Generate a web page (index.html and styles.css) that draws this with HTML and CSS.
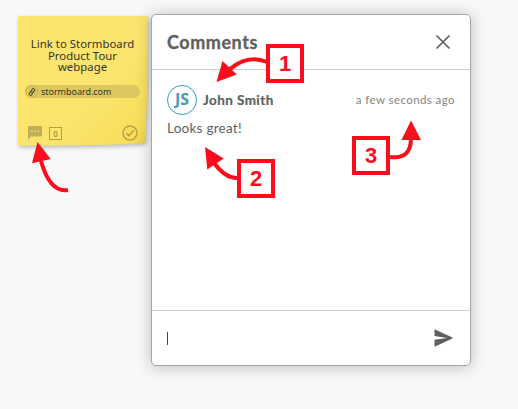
FILE: index.html
```html
<!DOCTYPE html>
<html lang="en">
<head>
<meta charset="utf-8">
<title>Comments</title>
<link rel="stylesheet" href="styles.css">
</head>
<body>
<main class="board">
  <article class="note">
    <svg class="note-paper" viewBox="0 0 131 131" aria-hidden="true">
      <defs><linearGradient id="paper" x1="0" y1="0" x2="1" y2="1"><stop offset="0" stop-color="#fce46d"/><stop offset=".6" stop-color="#fbe56f"/><stop offset=".92" stop-color="#f8dd59"/><stop offset="1" stop-color="#eccb3f"/></linearGradient></defs>
      <path d="M0 0H130Q130 65 127.5 124Q127.5 127 124 127.2Q90 129.5 0 129.5Z" fill="url(#paper)"/>
    </svg>
    <h2 class="note-title">Link to Stormboard<br>Product Tour<br>webpage</h2>
    <div class="link-pill">
      <span class="link-icon"><svg width="8" height="8" viewBox="0 0 24 24" fill="none" stroke="#4d4828" stroke-width="3" stroke-linecap="round"><g transform="rotate(-12 12 12)"><path d="M10 14a4 4 0 0 0 6 0l4-4a4 4 0 0 0-6-6l-2 2M14 10a4 4 0 0 0-6 0l-4 4a4 4 0 0 0 6 6l2-2"/></g></svg></span>
      <span class="link-text">stormboard.com</span>
    </div>
    <footer class="note-footer">
      <svg width="14" height="14" viewBox="0 0 14 14"><path d="M1.2 0H12.8Q14 0 14 1.2V9.3Q14 10.5 12.8 10.5H3L0 13.5V1.2Q0 0 1.2 0Z" fill="#c0ae55"/><path d="M3 5.3h1.6M6.2 5.3h1.6M9.4 5.3h1.6" stroke="#f3dd70" stroke-width="1.5"/></svg>
      <span class="votes">0</span>
      <svg class="check" width="16" height="16" viewBox="0 0 16 16" fill="none" stroke="#b5a145"><circle cx="8" cy="8" r="7" stroke-width="1.4"/><path d="M4.2 8.2 6.8 10.6 11.8 5.3" stroke-width="1.5"/></svg>
    </footer>
  </article>

  <section class="dialog">
    <header class="dialog-header">
      <h1 class="dialog-title">Comments</h1>
      <svg width="14" height="14" viewBox="0 0 14 14" fill="none" stroke="#5d5d5d" stroke-width="1.7" stroke-linecap="round"><path d="M1 1 13 13M13 1 1 13"/></svg>
    </header>
    <div class="comments">
      <div class="comment-head">
        <span class="avatar">JS</span>
        <strong class="author">John Smith</strong>
        <time class="time">a few seconds ago</time>
      </div>
      <p class="comment-text">Looks great!</p>
    </div>
    <footer class="composer">
      <span class="caret"></span>
      <svg width="19" height="18" viewBox="0 0 19 18"><path d="M.5.8Q.5.2 1.1.4L18.4 8.5Q19 9 18.4 9.4L1.1 17.5Q.5 17.7.5 17V10.8L13 9 .5 7.1Z" fill="#5d5f60"/></svg>
    </footer>
  </section>

  <svg class="arrows" width="518" height="409" viewBox="0 0 518 409" aria-hidden="true">
    <g fill="none" stroke="#fc0d1b" stroke-width="4">
      <path d="M68 190Q50 193 41 161"/>
      <path d="M267 62Q248 54 230 69"/>
      <path d="M238 178Q226 179 214 163"/>
      <path d="M390 157Q411 160 411 138"/>
    </g>
    <g fill="#fc0d1b">
      <path d="M37.5 142 50.7 159 32 163.3Z"/>
      <path d="M216.5 82 222.5 61 236.8 74.5Z"/>
      <path d="M205 147 223.7 158.5 207.3 169.5Z"/>
      <path d="M411 120.5 421 140H401.5Z"/>
    </g>
  </svg>
  <span class="marker m1">1</span>
  <span class="marker m2">2</span>
  <span class="marker m3">3</span>
</main>
</body>
</html>
```
FILE: styles.css
```css
* { box-sizing: border-box; }
body {
  margin: 0;
  background: #f8f8f8;
  font-family: "Liberation Sans", sans-serif;
}
.board {
  position: relative;
  display: flex;
  align-items: flex-start;
  width: 518px;
  height: 409px;
  padding: 14px 0 0 18px;
  overflow: hidden;
}
.note {
  position: relative;
  width: 131px;
  height: 131px;
  margin: 2px 2px 0 0;
  padding: 22px 8px 0 7px;
  font-family: "Noto Sans", sans-serif;
  color: #35332a;
}
.note-paper {
  position: absolute;
  inset: 0;
  width: 131px;
  height: 131px;
  overflow: visible;
  filter: drop-shadow(1px 2px 2px rgba(0, 0, 0, .25));
}
.note-title {
  position: relative;
  margin: 0 1px 0 0;
  font-size: 11.3px;
  font-weight: 400;
  line-height: 11.5px;
  letter-spacing: .05px;
  text-align: center;
  white-space: nowrap;
}
.link-pill {
  position: relative;
  display: flex;
  align-items: center;
  width: 115px;
  height: 13px;
  margin-top: 12.5px;
  border-radius: 7px;
  background: #dcc85f;
}
.link-icon {
  display: flex;
  align-items: center;
  justify-content: center;
  width: 13px;
  height: 13px;
  margin-right: 3px;
  border: 1px solid #c9b655;
  border-radius: 50%;
}
.link-text { font-size: 9px; line-height: 12px; letter-spacing: -.03px; }
.note-footer {
  position: relative;
  display: flex;
  align-items: center;
  height: 16px;
  margin: 27px 0 0 3px;
}
.votes {
  width: 13px;
  height: 13px;
  margin-left: 7px;
  border: 1px solid #b5a145;
  color: #a99746;
  font-size: 8px;
  font-weight: 600;
  line-height: 11px;
  text-align: center;
}
.check { margin-left: auto; margin-right: 3px; }
.dialog {
  position: relative;
  display: flex;
  flex-direction: column;
  width: 320px;
  height: 352px;
  border: 1px solid #a5a5a5;
  border-radius: 5px;
  background: #fff;
  box-shadow: 0 1px 16px rgba(0, 0, 0, .24);
  color: #5d5f60;
  font-family: Lato, sans-serif;
}
.dialog-header {
  display: flex;
  align-items: center;
  justify-content: space-between;
  height: 55px;
  padding: 0 20px 0 15px;
  border-bottom: 1px solid #c8ced6;
}
.dialog-title {
  margin: 0;
  font-size: 18px;
  font-weight: 700;
  line-height: 24px;
  letter-spacing: .55px;
  -webkit-text-stroke: .3px #5d5f60;
}
.comments { flex: 1; padding: 15px 15px 0; }
.comment-head { display: flex; align-items: center; height: 30px; }
.avatar {
  width: 30px;
  height: 30px;
  border: 1px solid #2aa0c8;
  border-radius: 50%;
  color: #459bb4;
  font-family: "Noto Sans", sans-serif;
  font-size: 16px;
  font-weight: 700;
  line-height: 27px;
  text-align: center;
}
.author {
  margin-left: 6px;
  font-size: 13.5px;
  font-weight: 700;
  line-height: 20px;
  letter-spacing: .42px;
  -webkit-text-stroke: .2px #5d5f60;
}
.time {
  margin-left: auto;
  color: #858585;
  font-size: 11.5px;
  line-height: 20px;
  letter-spacing: .42px;
}
.comment-text {
  margin: 3px 0 0;
  font-size: 13.5px;
  line-height: 20px;
  letter-spacing: .25px;
}
.composer {
  display: flex;
  align-items: center;
  justify-content: space-between;
  height: 55px;
  padding: 0 17px 0 15px;
  border-top: 1px solid #cdd0d6;
}
.caret { width: 1px; height: 13px; background: #444; }
.arrows { position: absolute; left: 0; top: 0; }
.marker {
  position: absolute;
  width: 38px;
  height: 39px;
  border: 4px solid #fc0d1b;
  background: #fff;
  color: #fc0d1b;
  font-size: 22px;
  font-weight: 700;
  line-height: 31px;
  text-align: center;
}
.m1 { left: 266px; top: 44px; }
.m2 { left: 237px; top: 159px; }
.m3 { left: 352px; top: 136px; }
```
